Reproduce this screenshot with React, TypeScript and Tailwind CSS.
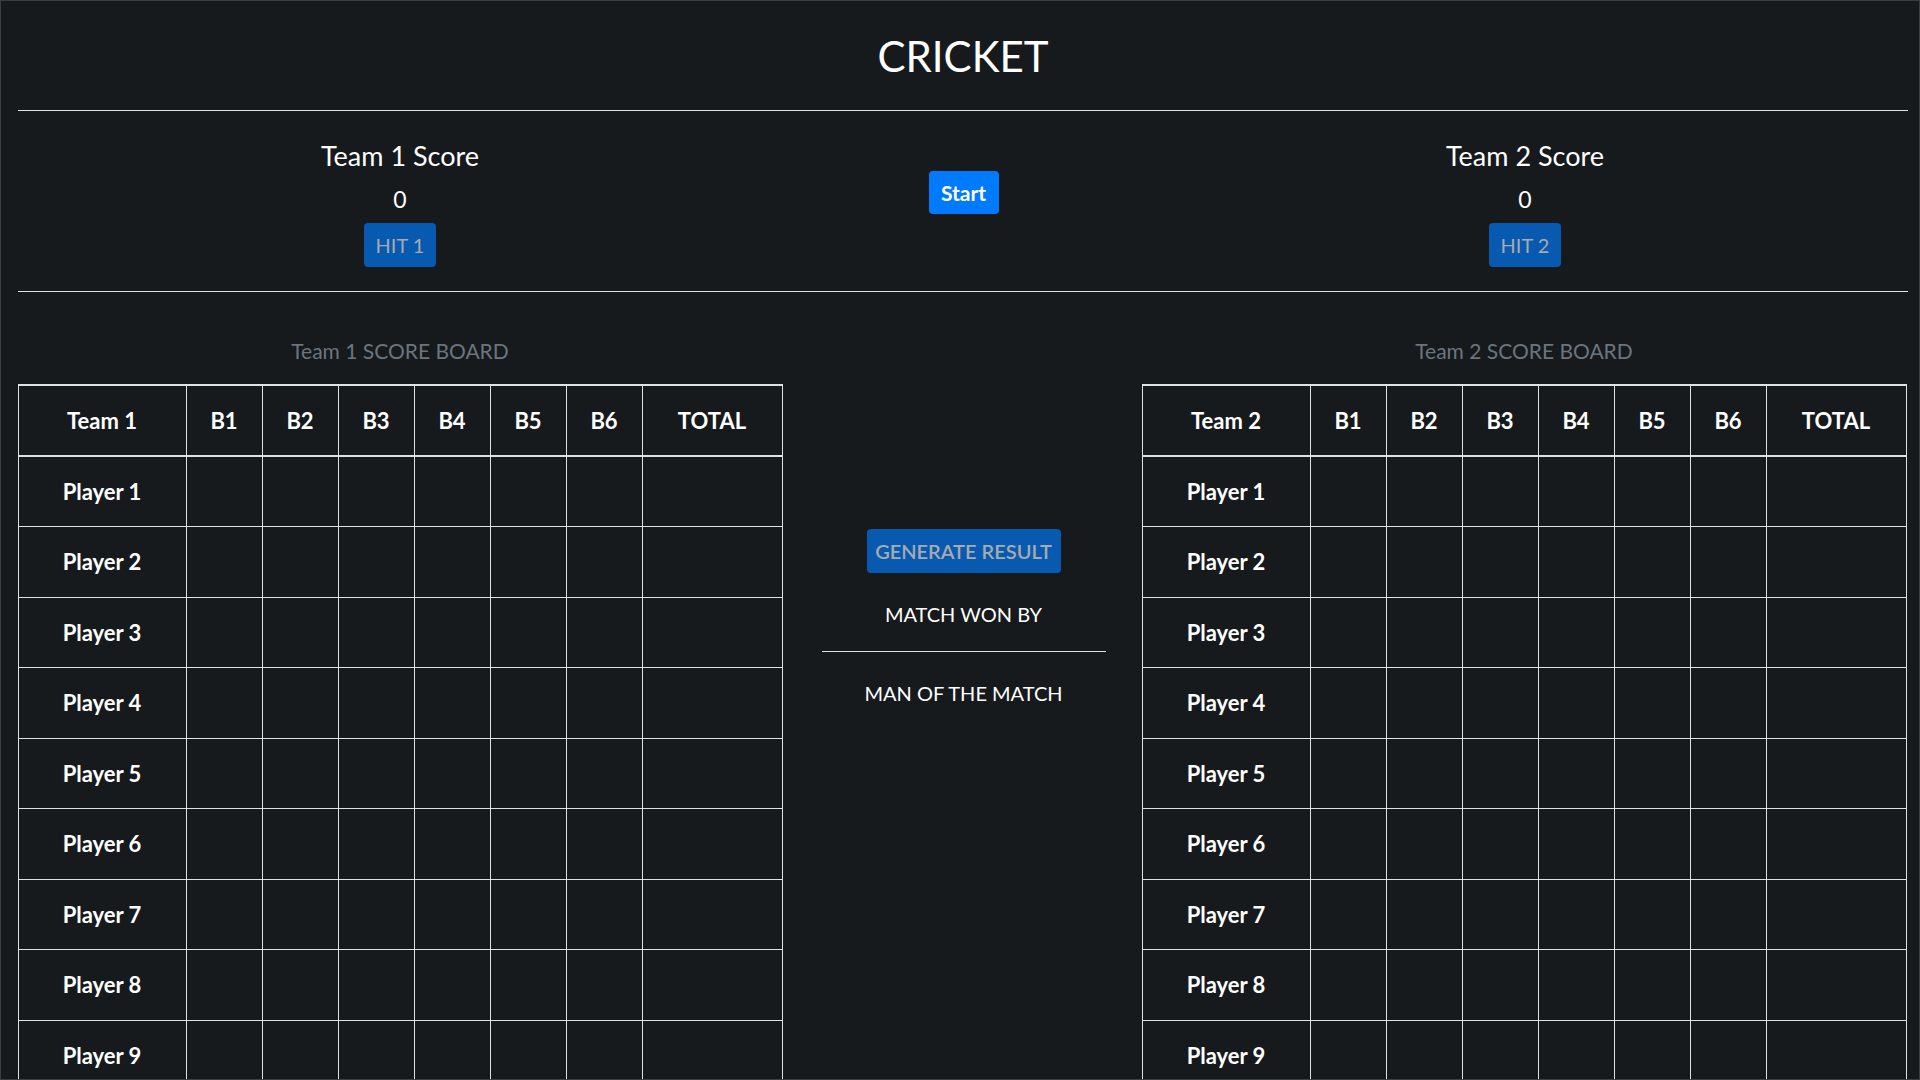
import React from 'react';

const balls = ['B1', 'B2', 'B3', 'B4', 'B5', 'B6'];
const players = Array.from({ length: 9 }, (_, i) => `Player ${i + 1}`);

const ScoreTable = ({ team }: { team: string }) => {
  return (
    <table className="w-[764px] table-fixed border-collapse">
      <colgroup>
        <col className="w-[168px]" />
        {balls.map((b) => (
          <col key={b} className="w-[76px]" />
        ))}
        <col className="w-[140px]" />
      </colgroup>
      <thead>
        <tr className="h-[71px]">
          <th className="border border-t-2 border-b-2 border-[#dee2e6] text-[22px] font-bold">{team}</th>
          {balls.map((b) => (
            <th key={b} className="border border-t-2 border-b-2 border-[#dee2e6] text-[22px] font-bold">
              {b}
            </th>
          ))}
          <th className="border border-t-2 border-b-2 border-[#dee2e6] text-[22px] font-bold">TOTAL</th>
        </tr>
      </thead>
      <tbody>
        {players.map((p) => (
          <tr key={p} className="h-[70.5px]">
            <td className="border border-[#dee2e6] text-center text-[22px] font-bold">{p}</td>
            {balls.map((b) => (
              <td key={b} className="border border-[#dee2e6]" />
            ))}
            <td className="border border-[#dee2e6]" />
          </tr>
        ))}
      </tbody>
    </table>
  );
};

const TeamScore = ({ n }: { n: number }) => (
  <div className="flex flex-col items-center pt-[31px]">
    <h3 className="text-[27px] leading-none">Team {n} Score</h3>
    <div className="mt-[19px] text-[23px] leading-none">0</div>
    <button
      disabled
      className="mt-[12px] h-[44px] w-[72px] rounded bg-[#0859b0] text-[20px] text-[#a7abae]"
    >
      HIT {n}
    </button>
  </div>
);

export default function App() {
  return (
    <div
      className="h-screen w-full overflow-hidden border border-[#3a3e41] bg-[#161a1d] text-white"
      style={{ fontFamily: 'Lato, "Noto Sans", sans-serif' }}
    >
      <div className="pl-[17px] pr-[11px]">
        <div className="flex h-[109px] items-center justify-center">
          <h1 className="text-[42px] leading-none">CRICKET</h1>
        </div>
        <div className="border-t border-[#dee2e6]" />

        <div className="grid h-[180px] grid-cols-[764px_1fr_766px]">
          <TeamScore n={1} />
          <div className="flex justify-center pl-[3px] pt-[60px]">
            <button className="h-[43px] w-[70px] rounded bg-[#007bff] text-[21px] font-bold text-white">
              Start
            </button>
          </div>
          <TeamScore n={2} />
        </div>
        <div className="border-t border-[#dee2e6]" />

        <div className="grid grid-cols-[764px_1fr_766px]">
          <div className="flex flex-col items-center pt-[48px]">
            <h5 className="text-[21px] leading-none text-[#6c757d]">Team 1 SCORE BOARD</h5>
            <div className="mt-[23px]">
              <ScoreTable team="Team 1" />
            </div>
          </div>

          <div className="flex flex-col items-center pl-[3px] pt-[237px]">
            <button
              disabled
              className="h-[44px] w-[194px] rounded bg-[#0859b0] text-[20px] font-semibold text-[#a7abae]"
            >
              GENERATE RESULT
            </button>
            <p className="mt-[31px] text-[20px] leading-none">MATCH WON BY</p>
            <div className="mt-[27px] w-[284px] border-t border-[#dee2e6]" />
            <p className="mt-[31px] text-[20px] leading-none">MAN OF THE MATCH</p>
          </div>

          <div className="flex flex-col items-center pr-[2px] pt-[48px]">
            <h5 className="text-[21px] leading-none text-[#6c757d]">Team 2 SCORE BOARD</h5>
            <div className="mt-[23px]">
              <ScoreTable team="Team 2" />
            </div>
          </div>
        </div>
      </div>
    </div>
  );
}
